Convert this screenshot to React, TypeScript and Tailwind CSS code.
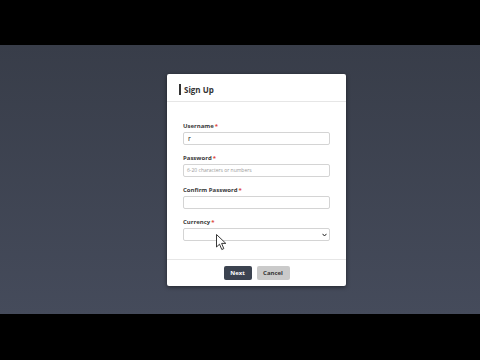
import React from "react";

export default function App() {
  const label = (t: string) => (
    <div className="text-[6px] font-bold text-[#3a3a3a] leading-none h-[6px] flex items-center">
      {t}
      <span className="text-[#e0443a] ml-[1px]">*</span>
    </div>
  );
  return (
    <div className="w-[480px] h-[360px] flex flex-col bg-black overflow-hidden" style={{ fontFamily: '"Open Sans", "Liberation Sans", sans-serif' }}>
      <div className="h-[45px] bg-black" />
      <div className="h-[269px] bg-gradient-to-b from-[#383d49] to-[#454b5b] pt-[29px] pl-[167px] relative">
        <div className="w-[179px] h-[212px] bg-white rounded-[2px] shadow-[0_1px_4px_rgba(0,0,0,0.5)] flex flex-col">
          <div className="h-[28px] border-b border-[#e6e6e6] flex items-center pl-[12px] pt-[4px]">
            <div className="w-[2px] h-[11px] bg-[#333]" />
            <div className="ml-[3px] text-[8px] font-bold text-[#333] leading-none">Sign Up</div>
          </div>
          <div className="flex-1 px-[16px] pt-[21px] flex flex-col border-b border-[#e6e6e6]">
            {label("Username")}
            <div className="mt-[3px] h-[13px] border border-[#d4d4d4] rounded-[2px] flex items-center pl-[4px] text-[7px] text-[#222] leading-none">r</div>
            <div className="mt-[10px]">{label("Password")}</div>
            <div className="mt-[3px] h-[13px] border border-[#d4d4d4] rounded-[2px] flex items-center pl-[3px] text-[5px] text-[#9a9a9a] leading-none">6-20 characters or numbers</div>
            <div className="mt-[10px]">{label("Confirm Password")}</div>
            <div className="mt-[3px] h-[13px] border border-[#d4d4d4] rounded-[2px]" />
            <div className="mt-[10px]">{label("Currency")}</div>
            <div className="mt-[3px] h-[13px] border border-[#d4d4d4] rounded-[2px] flex items-center justify-end pr-[2px]">
              <svg width="5" height="4" viewBox="0 0 5 4"><path d="M0.5 0.8 L2.5 3 L4.5 0.8" fill="none" stroke="#222" strokeWidth="1" /></svg>
            </div>
          </div>
          <div className="h-[26px] flex items-center justify-center gap-[5px] pb-[1px]">
            <div className="w-[28px] h-[14px] bg-[#3c4350] rounded-[2px] flex items-center justify-center text-white text-[6px] font-bold leading-none">Next</div>
            <div className="w-[33px] h-[14px] bg-[#cacaca] rounded-[2px] flex items-center justify-center text-[#333] text-[6px] font-bold leading-none">Cancel</div>
          </div>
        </div>
        <svg className="absolute left-[216px] top-[189px]" width="12" height="17" viewBox="0 0 12 17">
          <path d="M0.5 0.5 L0.5 13 L3.5 10.2 L5.8 15.5 L7.8 14.6 L5.6 9.4 L9.8 9.4 Z" fill="white" stroke="#222" strokeWidth="0.9" strokeLinejoin="round" />
        </svg>
      </div>
      <div className="flex-1 bg-black" />
    </div>
  );
}
